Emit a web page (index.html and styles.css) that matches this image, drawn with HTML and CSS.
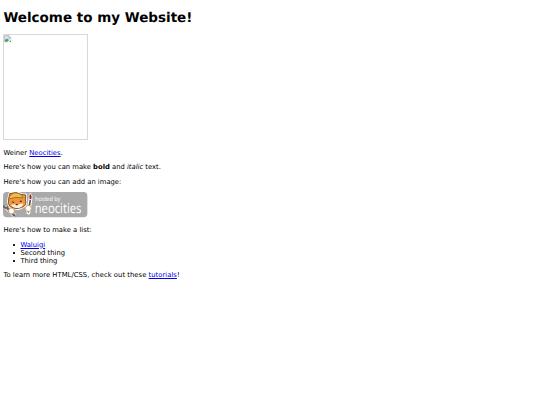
FILE: index.html
```html
<!DOCTYPE html>
<html lang="en">
<head>
    <meta charset="UTF-8">
    <meta name="viewport" content="width=device-width, initial-scale=1.0">
    <title>Welcome to my Website!</title>
    <link rel="stylesheet" href="styles.css">
</head>
<body>
    <h1>Welcome to my Website!</h1>

    <!-- Empty picture frame with the missing image icon -->
    <div class="picture">
        <svg class="missing" viewBox="0 0 16 16">
            <path d="M1 1h9l4 4v9H1z" fill="#c3d3f0" stroke="#a5a9ad"/>
            <path d="M10 1v4h4" fill="#fff" stroke="#a5a9ad"/>
            <path d="M2 13V10l4-3 5 6z" fill="#4da53f"/>
            <circle cx="5" cy="5" r="1.7" fill="#fff"/>
            <path d="M15 6L6 15h9z" fill="#fff"/>
            <path d="M10 14l4-4v4z" fill="#62a957"/>
        </svg>
    </div>

    <p>Weiner <a href="#">Neocities</a>.</p>

    <p>Here's how you can make <strong>bold</strong> and <em>italic</em> text.</p>

    <p>Here's how you can add an image:</p>

    <!-- Neocities badge -->
    <svg class="badge" viewBox="0 0 200 60">
        <rect width="200" height="60" rx="9" fill="#a9a9a9"/>
        <!-- wrench -->
        <path d="M6 35l22 22" stroke="#ddd" stroke-width="10"/>
        <path d="M8 36l20 21" stroke="#65615f" stroke-width="5"/>
        <path d="M1 32q2 8 9 5q5-4 0-10" fill="none" stroke="#65615f" stroke-width="4"/>
        <!-- brush -->
        <path d="M65 17l-5 32" stroke="#fff" stroke-width="9" stroke-linecap="round"/>
        <path d="M65 17l-5 30" stroke="#704c3d" stroke-width="4" stroke-linecap="round"/>
        <path d="M62 18q-3-9 3-16q6 9 3 16z" fill="#8e2f2c" stroke="#fff" stroke-width="2"/>
        <!-- cat -->
        <path d="M13 18L16 4q16-6 28 2l10 1-1 10q5 15-9 20q-14 6-27-2q-7-7-4-17z" fill="#ef963b" stroke="#fff" stroke-width="6"/>
        <path d="M13 18L16 4q16-6 28 2l10 1-1 10q5 15-9 20q-14 6-27-2q-7-7-4-17z" fill="#ef963b" stroke="#68401f" stroke-width="2"/>
        <path d="M13 17Q17 3 30 2q14 1 17 12q-17-4-34 3z" fill="#f0bc4c" stroke="#9c6725" stroke-width="2"/>
        <path d="M19 31q7-4 15 0q8-5 14-3q-2 9-12 10q-12 1-17-7z" fill="#fff2dc"/>
        <path d="M22 23l4 2m14-2l4-2m-14 9h5" fill="none" stroke="#3d2b25" stroke-width="3"/>
        <circle cx="20" cy="45" r="7" fill="#fff" stroke="#c99462" stroke-width="2"/>
        <circle cx="60" cy="39" r="7" fill="#fff" stroke="#d3a36b" stroke-width="2"/>
        <text class="hosted" x="76" y="22" textLength="60" lengthAdjust="spacingAndGlyphs">hosted by</text>
        <text class="brand" x="75" y="49" textLength="111" lengthAdjust="spacingAndGlyphs">neocities</text>
    </svg>

    <p>Here's how to make a list:</p>

    <ul>
        <li><a href="#">Waluigi</a></li>
        <li>Second thing</li>
        <li>Third thing</li>
    </ul>

    <p class="more">To learn more HTML/CSS, check out these <a href="#">tutorials</a>!</p>
</body>
</html>
```
FILE: styles.css
```css
body {
    font-family: 'DejaVu Sans', Verdana, sans-serif;
    font-size: 6.8px;
    line-height: 8px;
    text-rendering: geometricPrecision;
    color: black;
    background-color: white;
    margin: 0;
    padding: 10.2px 3.4px;
}
h1 {
    font-size: 13.5px;
    line-height: 16px;
    margin: 0 0 8.2px;
}
p, ul {
    margin: 6.75px 0;
}
a {
    color: #0000ee;
}
/* Picture frame */
.picture {
    box-sizing: border-box;
    width: 84.5px;
    height: 105.5px;
    border: 1px solid #d9d9d9;
    margin-bottom: 8.8px;
}
.missing {
    display: block;
    width: 8px;
    height: 8px;
}
/* Badge */
.badge {
    display: block;
    width: 84.4px;
    height: 25.3px;
    margin-top: -0.7px;
    margin-bottom: 8.3px;
}
.hosted, .brand {
    font-family: 'Open Sans', sans-serif;
    fill: white;
}
.hosted {
    font-size: 14px;
}
.brand {
    font-size: 32px;
    font-weight: 500;
}
/* List */
ul {
    padding-left: 17px;
    list-style: none;
}
li {
    position: relative;
}
li::before {
    content: "";
    position: absolute;
    left: -7px;
    top: 3px;
    width: 2px;
    height: 2px;
    background-color: #222;
}
.more {
    letter-spacing: 0.035px;
}
```
